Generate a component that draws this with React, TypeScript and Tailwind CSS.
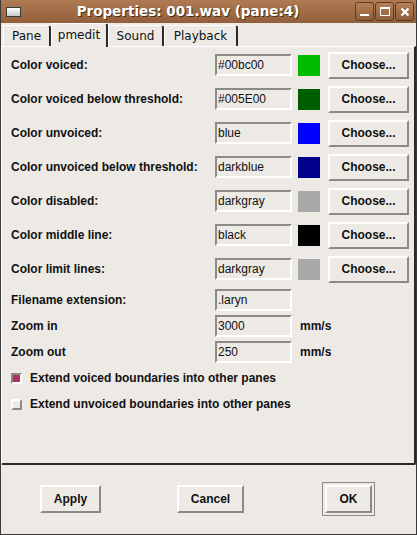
import React from "react";

const font = "font-['Liberation_Sans',Arial,sans-serif]";

const colorRows = [
  { label: "Color voiced:", value: "#00bc00", swatch: "bg-[#00bc00]" },
  { label: "Color voiced below threshold:", value: "#005E00", swatch: "bg-[#005e00]" },
  { label: "Color unvoiced:", value: "blue", swatch: "bg-[#0000ff]" },
  { label: "Color unvoiced below threshold:", value: "darkblue", swatch: "bg-[#00008b]" },
  { label: "Color disabled:", value: "darkgray", swatch: "bg-[#a9a9a9]" },
  { label: "Color middle line:", value: "black", swatch: "bg-[#000000]" },
  { label: "Color limit lines:", value: "darkgray", swatch: "bg-[#a9a9a9]" },
];

const Entry = ({ value }: { value: string }) => (
  <div className="w-[77px] h-[22px] border-2 border-t-[#8c8a87] border-l-[#8c8a87] border-b-white border-r-white bg-[#edeae6] flex items-center pl-[1px] text-[12px] text-[#111]">
    {value}
  </div>
);

const RaisedButton = ({ label, className }: { label: string; className: string }) => (
  <div
    className={`${className} border-2 border-t-white border-l-white border-b-[#8c8a87] border-r-[#8c8a87] bg-[#edeae6] flex items-center justify-center text-[12px] font-bold text-[#111]`}
  >
    {label}
  </div>
);

const TitleButton = ({ children }: { children: React.ReactNode }) => (
  <div className="w-[19px] h-[19px] rounded-[3px] border border-[#5e3c22] bg-gradient-to-b from-[#b48058] to-[#8f5f3c] flex items-center justify-center">
    {children}
  </div>
);

export default function App() {
  return (
    <div className={`${font} w-[417px] h-[535px] bg-[#edeae6] border-l border-r border-b border-[#3a3a3a] flex flex-col overflow-hidden`}>
      {/* title bar */}
      <div className="h-[23px] shrink-0 bg-gradient-to-b from-[#b07b53] to-[#925f3b] flex items-center px-[5px]">
        <div className="w-[15px] h-[10px] border border-[#3a3a3a] bg-gradient-to-b from-[#ffffff] to-[#c8c8c8]" />
        <div className="flex-1 text-center text-white font-bold text-[13.5px] font-['DejaVu_Sans',sans-serif] [text-shadow:1px_1px_0_#4a2e18]">
          Properties: 001.wav (pane:4)
        </div>
        <div className="flex gap-[1px] -mr-[3px]">
          <TitleButton>
            <div className="w-[9px] h-[2px] bg-white mt-[7px]" />
          </TitleButton>
          <TitleButton>
            <div className="w-[10px] h-[9px] border border-white border-t-2" />
          </TitleButton>
          <TitleButton>
            <svg width="10" height="10" viewBox="0 0 10 10">
              <path d="M1.5 1.5 L8.5 8.5 M8.5 1.5 L1.5 8.5" stroke="white" strokeWidth="2.2" />
            </svg>
          </TitleButton>
        </div>
      </div>

      {/* tabs */}
      <div className="h-[23px] shrink-0 flex items-end pl-[2px] text-[12px] text-[#111] font-['DejaVu_Sans',sans-serif]">
        <div className="w-[48px] h-[21px] border-t border-l border-white border-r-2 border-r-[#2a2a2a] rounded-tr-[3px] flex items-center justify-center">
          Pane
        </div>
        <div className="w-[57px] h-[24px] -mb-[1px] bg-[#edeae6] border-t border-l border-white border-r-2 border-r-[#2a2a2a] rounded-tr-[3px] flex items-start justify-center pt-[2px] relative z-10">
          pmedit
        </div>
        <div className="w-[56px] h-[21px] border-t border-l border-white border-r-2 border-r-[#2a2a2a] rounded-tr-[3px] flex items-center justify-center">
          Sound
        </div>
        <div className="w-[74px] h-[21px] border-t border-l border-white border-r-2 border-r-[#2a2a2a] rounded-tr-[3px] flex items-center justify-center">
          Playback
        </div>
      </div>

      {/* panel */}
      <div className="h-[419px] shrink-0 border-t border-l border-white border-b-2 border-r-2 border-b-[#2a2a2a] border-r-[#2a2a2a] rounded-b-[2px] pt-[1px] text-[12px] font-bold text-[#111]">
        {colorRows.map((r) => (
          <div key={r.label} className="h-[34px] flex items-center">
            <div className="w-[213px] pl-[9px]">{r.label}</div>
            <div className="font-normal">
              <Entry value={r.value} />
            </div>
            <div className={`w-[22px] h-[21px] ml-[6px] ${r.swatch}`} />
            <RaisedButton label="Choose..." className="w-[81px] h-[27px] ml-[8px]" />
          </div>
        ))}
        <div className="h-[26px] flex items-center mt-[1px]">
          <div className="w-[213px] pl-[9px]">Filename extension:</div>
          <div className="font-normal">
            <Entry value=".laryn" />
          </div>
        </div>
        <div className="h-[26px] flex items-center">
          <div className="w-[213px] pl-[9px]">Zoom in</div>
          <div className="font-normal">
            <Entry value="3000" />
          </div>
          <div className="ml-[8px]">mm/s</div>
        </div>
        <div className="h-[26px] flex items-center">
          <div className="w-[213px] pl-[9px]">Zoom out</div>
          <div className="font-normal">
            <Entry value="250" />
          </div>
          <div className="ml-[8px]">mm/s</div>
        </div>
        <div className="h-[26px] flex items-center pl-[9px]">
          <div className="w-[11px] h-[11px] border-2 border-t-[#8c8a87] border-l-[#8c8a87] border-b-white border-r-white bg-[#b03060]" />
          <div className="ml-[8px]">Extend voiced boundaries into other panes</div>
        </div>
        <div className="h-[26px] flex items-center pl-[9px]">
          <div className="w-[11px] h-[11px] border-2 border-t-white border-l-white border-b-[#8c8a87] border-r-[#8c8a87] bg-[#edeae6]" />
          <div className="ml-[8px]">Extend unvoiced boundaries into other panes</div>
        </div>
      </div>

      {/* bottom buttons */}
      <div className="flex-1 flex items-center pl-[39px] pb-[2px]">
        <RaisedButton label="Apply" className="w-[61px] h-[28px]" />
        <RaisedButton label="Cancel" className="w-[67px] h-[28px] ml-[76px]" />
        <div className="ml-[78px] border border-[#8c8a87] p-[2px] bg-[#edeae6]">
          <RaisedButton label="OK" className="w-[47px] h-[28px]" />
        </div>
      </div>
    </div>
  );
}
